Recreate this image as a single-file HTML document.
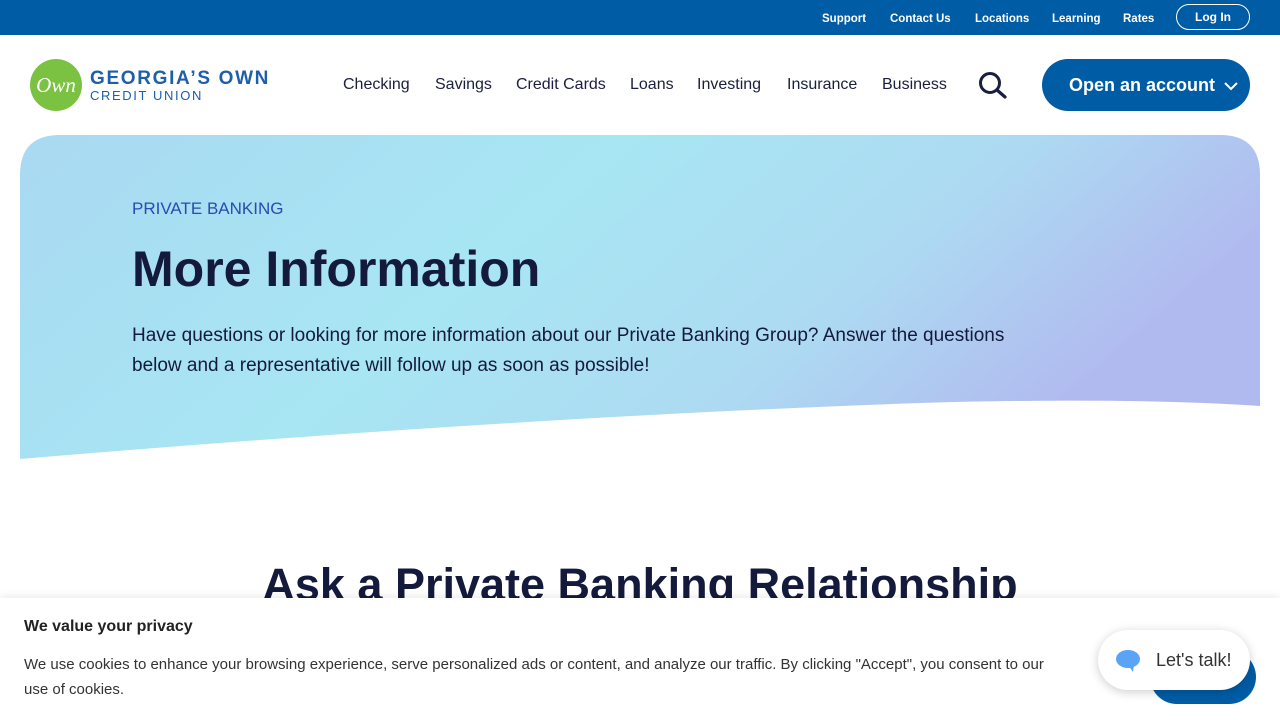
<!DOCTYPE html>
<html><head><meta charset="utf-8"><style>
*{margin:0;padding:0;box-sizing:border-box}
body{width:1280px;height:720px;overflow:hidden;background:#fff;font-family:"Liberation Sans",sans-serif;color:#1a1f3d;position:relative}
.top{height:35px;background:#005ca5;position:relative}
.top a{position:absolute;top:13px;color:#fff;font-weight:bold;font-size:11.5px}
.login{position:absolute;left:1176px;top:4px;width:74px;height:26px;border:1px solid #fff;border-radius:13px;color:#fff;font-weight:bold;font-size:12px;text-align:center;line-height:24px}
.nav a{position:absolute;top:76px;font-size:16px;color:#1a1f3d}
.open{position:absolute;left:1042px;top:59px;width:208px;height:52px;border-radius:26px;background:#005ca5;color:#fff;font-weight:bold;font-size:18px;line-height:52px;padding-left:27px}
.hero{position:absolute;left:20px;top:135px;width:1240px;height:330px}
h1{position:absolute;left:132px;top:240px;font-size:50px;font-weight:bold;color:#141a3c}
.eyebrow{position:absolute;left:132px;top:199px;font-size:17px;color:#2a4bb0}
.p{position:absolute;left:132px;top:321px;font-size:19px;line-height:30px;width:925px;color:#141a3c}
h2{position:absolute;left:0;width:1280px;text-align:center;top:559px;font-size:45px;font-weight:bold;color:#141a3c}
.cookie{position:absolute;left:0;top:598px;width:1280px;height:122px;background:#fff;box-shadow:0 -2px 8px rgba(0,0,0,.08)}
.cookie h3{position:absolute;left:24px;top:20px;font-size:16px;font-weight:bold;color:#222}
.cookie p{position:absolute;left:24px;top:54px;width:1030px;font-size:15px;line-height:25px;color:#333}
.chatbg{position:absolute;left:1150px;top:650px;width:106px;height:54px;border-radius:27px;background:#005ca5}
.chat{position:absolute;left:1098px;top:630px;width:152px;height:60px;border-radius:30px;background:#fff;box-shadow:0 2px 10px rgba(0,0,0,.2);font-size:18px;color:#333;line-height:60px;padding-left:58px}
</style></head><body>
<div class="top">
<a style="left:822px">Support</a><a style="left:890px">Contact Us</a><a style="left:975px">Locations</a><a style="left:1052px">Learning</a><a style="left:1123px">Rates</a>
<div class="login">Log In</div></div>
<svg style="position:absolute;left:30px;top:59px" width="245" height="52"><circle cx="26" cy="26" r="26" fill="#7cc242"/><text x="26" y="33" text-anchor="middle" fill="#fff" font-family="Liberation Serif" font-style="italic" font-size="21">Own</text>
<text x="60" y="25" fill="#1d5fa8" font-size="19" font-weight="bold" letter-spacing="1.6" font-family="Liberation Sans" textLength="180">GEORGIA’S OWN</text>
<text x="60" y="41" fill="#1d5fa8" font-size="13" letter-spacing="1.6" font-family="Liberation Sans" textLength="113">CREDIT UNION</text></svg>
<div class="nav"><a style="left:343px">Checking</a><a style="left:435px">Savings</a><a style="left:516px">Credit Cards</a><a style="left:630px">Loans</a><a style="left:697px">Investing</a><a style="left:787px">Insurance</a><a style="left:882px">Business</a></div>
<svg style="position:absolute;left:977px;top:71px" width="32" height="28"><circle cx="13" cy="12" r="9.5" fill="none" stroke="#1a1f3d" stroke-width="3"/><line x1="20" y1="19" x2="28" y2="26" stroke="#1a1f3d" stroke-width="3.2" stroke-linecap="round"/></svg>
<div class="open">Open an account <svg width="14" height="10" style="margin-left:4px"><path d="M1 2l6 6 6-6" fill="none" stroke="#fff" stroke-width="2"/></svg></div>
<svg class="hero" viewBox="0 0 1240 330"><defs><linearGradient id="g" x1="0" x2="1" y1="0" y2="0.3"><stop offset="0" stop-color="#a9d9f2"/><stop offset=".45" stop-color="#a8e6f3"/><stop offset=".75" stop-color="#addaf2"/><stop offset="1" stop-color="#b1baef"/></linearGradient></defs>
<path d="M0 40Q0 0 40 0H1200Q1240 0 1240 40V271Q1100 262 900 268Q500 282 0 324Z" fill="url(#g)"/></svg>
<div class="eyebrow">PRIVATE BANKING</div>
<h1>More Information</h1>
<div class="p">Have questions or looking for more information about our Private Banking Group? Answer the questions below and a representative will follow up as soon as possible!</div>
<h2>Ask a Private Banking Relationship</h2>
<div class="cookie"><h3>We value your privacy</h3><p>We use cookies to enhance your browsing experience, serve personalized ads or content, and analyze our traffic. By clicking "Accept", you consent to our use of cookies.</p></div>
<div class="chatbg"></div>
<div class="chat"><svg style="position:absolute;left:18px;top:19px" width="26" height="24"><ellipse cx="12" cy="10" rx="12" ry="9" fill="#5aa3f5"/><path d="M12 16l5 7 1-8z" fill="#5aa3f5"/></svg>Let's talk!</div>
</body></html>
